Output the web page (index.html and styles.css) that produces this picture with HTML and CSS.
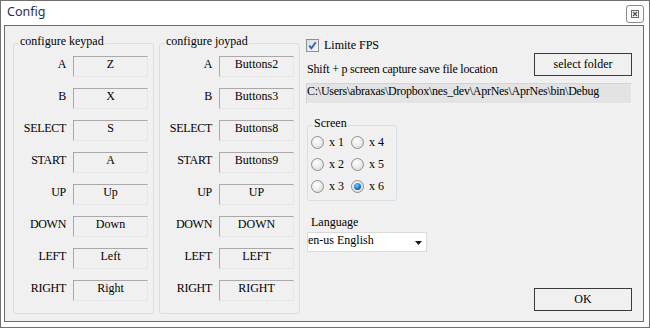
FILE: index.html
```html
<!DOCTYPE html>
<html>
<head>
<meta charset="utf-8">
<link rel="stylesheet" href="styles.css">
</head>
<body>
<div class="window">
  <div class="titlebar">
    <span class="title">Config</span>
    <span class="close"><svg width="10" height="10" viewBox="0 0 10 10"><rect x="1.5" y="1.5" width="7" height="7" fill="none" stroke="#6a6a6a" stroke-width="1"/><path d="M3 3 L7 7 M7 3 L3 7" stroke="#4a4a4a" stroke-width="1.2"/></svg></span>
  </div>
  <div class="client">
    <div class="group keys">
      <span class="legend">configure keypad</span>
      <div class="map">
        <span class="lbl">A</span><span class="box">Z</span>
        <span class="lbl">B</span><span class="box">X</span>
        <span class="lbl">SELECT</span><span class="box">S</span>
        <span class="lbl">START</span><span class="box">A</span>
        <span class="lbl">UP</span><span class="box">Up</span>
        <span class="lbl">DOWN</span><span class="box">Down</span>
        <span class="lbl">LEFT</span><span class="box">Left</span>
        <span class="lbl">RIGHT</span><span class="box">Right</span>
      </div>
    </div>
    <div class="group keys joy">
      <span class="legend">configure joypad</span>
      <div class="map">
        <span class="lbl">A</span><span class="box">Buttons2</span>
        <span class="lbl">B</span><span class="box">Buttons3</span>
        <span class="lbl">SELECT</span><span class="box">Buttons8</span>
        <span class="lbl">START</span><span class="box">Buttons9</span>
        <span class="lbl">UP</span><span class="box">UP</span>
        <span class="lbl">DOWN</span><span class="box">DOWN</span>
        <span class="lbl">LEFT</span><span class="box">LEFT</span>
        <span class="lbl">RIGHT</span><span class="box">RIGHT</span>
      </div>
    </div>
    <div class="side">
      <div class="chk-row">
        <span class="chk"><svg width="11" height="11" viewBox="0 0 11 11"><path d="M2.2 5.6 L4.4 8.2 L8.8 2.2" fill="none" stroke="#2a5cb8" stroke-width="1.8"/></svg></span>
        <span>Limite FPS</span>
      </div>
      <div class="cap-row">
        <span class="cap-text">Shift + p screen capture save file location</span>
        <span class="btn">select folder</span>
      </div>
      <div class="path">C:\Users\abraxas\Dropbox\nes_dev\AprNes\AprNes\bin\Debug</div>
      <div class="group screen">
        <span class="legend">Screen</span>
        <div class="radios">
          <span class="opt"><span class="radio"></span>x 1</span>
          <span class="opt"><span class="radio"></span>x 4</span>
          <span class="opt"><span class="radio"></span>x 2</span>
          <span class="opt"><span class="radio"></span>x 5</span>
          <span class="opt"><span class="radio"></span>x 3</span>
          <span class="opt"><span class="radio on"></span>x 6</span>
        </div>
      </div>
      <div class="lang-lbl">Language</div>
      <div class="combo">
        <span>en-us English</span>
        <svg class="arrow" width="7" height="4" viewBox="0 0 7 4"><polygon points="0,0 7,0 3.5,4" fill="#1a1a1a"/></svg>
      </div>
      <span class="btn ok">OK</span>
    </div>
  </div>
</div>
</body>
</html>
```
FILE: styles.css
```css
html, body {
  margin: 0;
  padding: 0;
  background: #ffffff;
}
body {
  font-family: "Liberation Serif", serif;
  font-size: 12px;
  color: #000;
}
.window {
  width: 650px;
  height: 328px;
  box-sizing: border-box;
  border: 1px solid #707070;
  padding: 0 5px 5px 3px;
  display: flex;
  flex-direction: column;
  background: #fff;
}
.titlebar {
  height: 24px;
  flex: none;
  display: flex;
  justify-content: space-between;
  align-items: flex-start;
}
.title {
  font-family: "Noto Sans", sans-serif;
  font-size: 12.5px;
  line-height: 16px;
  padding: 3px 0 0 3px;
  color: #1d2f5c;
}
.close {
  margin-top: 4px;
  width: 18px;
  height: 18px;
  box-sizing: border-box;
  border: 1px solid #8a8a8a;
  border-radius: 3px;
  display: flex;
  align-items: center;
  justify-content: center;
  background: #fbfbfb;
}
.client {
  flex: 1;
  border: 1px solid #6b6b6b;
  background: #f0f0f0;
  display: flex;
  align-items: flex-start;
}
.group {
  position: relative;
  box-sizing: border-box;
  border: 1px solid #d5dfe5;
  border-radius: 3px;
}
.legend {
  position: absolute;
  top: -10px;
  left: 5px;
  padding: 0 1px;
  line-height: 14px;
  background: #f0f0f0;
}
.keys {
  margin: 17px 0 0 8px;
  width: 141px;
  height: 271px;
  padding-top: 12px;
}
.joy {
  margin-left: 5px;
}
.map {
  display: grid;
  grid-template-columns: 52px 75px;
  column-gap: 7px;
  row-gap: 11px;
  grid-auto-rows: 21px;
  align-items: start;
}
.lbl {
  text-align: right;
  padding-top: 1px;
  line-height: 14px;
  white-space: nowrap;
  letter-spacing: -0.3px;
}
.box {
  height: 21px;
  box-sizing: border-box;
  border: 1px solid;
  border-color: #a9a9a9 #e6e6e6 #e6e6e6 #a9a9a9;
  text-align: center;
  line-height: 14px;
}
.side {
  margin: 12px 0 0 6px;
  width: 326px;
  display: flex;
  flex-direction: column;
}
.chk-row {
  display: flex;
  align-items: center;
  gap: 5px;
  height: 14px;
  line-height: 14px;
}
.chk {
  width: 13px;
  height: 13px;
  box-sizing: border-box;
  border: 1px solid #8e8f8f;
  background: linear-gradient(135deg, #dcdcdc, #f8f8f8);
  display: flex;
  align-items: center;
  justify-content: center;
}
.cap-row {
  margin-top: 1px;
  display: flex;
  justify-content: space-between;
  align-items: flex-end;
  line-height: 14px;
}
.cap-text {
  padding-left: 1px;
  letter-spacing: -0.2px;
}
.btn {
  width: 98px;
  height: 23px;
  box-sizing: border-box;
  border: 1px solid #3a3a3a;
  display: flex;
  align-items: center;
  justify-content: center;
  padding-bottom: 1px;
  line-height: 14px;
  background: #f0f0f0;
}
.path {
  margin-top: 7px;
  height: 21px;
  box-sizing: border-box;
  border: 1px solid;
  border-color: #d4d4d4 #f2f2f2 #f2f2f2 #d4d4d4;
  background: #e3e3e3;
  line-height: 14px;
  white-space: nowrap;
  overflow: hidden;
  letter-spacing: -0.25px;
}
.screen {
  margin: 21px 0 0 1px;
  width: 90px;
  height: 76px;
  padding: 5px 0 0 3px;
}
.radios {
  display: grid;
  grid-template-columns: 40px 40px;
  grid-auto-rows: 22px;
  align-items: center;
}
.opt {
  display: flex;
  align-items: center;
  gap: 5px;
  line-height: 14px;
}
.radio {
  width: 13px;
  height: 13px;
  box-sizing: border-box;
  border-radius: 50%;
  border: 1px solid #8f9090;
  background: radial-gradient(circle at 40% 35%, #ffffff, #d6d6d6);
  display: flex;
  align-items: center;
  justify-content: center;
}
.radio.on::after {
  content: "";
  width: 7px;
  height: 7px;
  border-radius: 50%;
  background: radial-gradient(circle at 40% 35%, #6cd0ff, #1a78c8 55%, #0b3f80);
}
.lang-lbl {
  margin-top: 14px;
  padding-left: 5px;
  line-height: 14px;
}
.combo {
  margin: 3px 0 0 1px;
  width: 120px;
  height: 20px;
  box-sizing: border-box;
  border: 1px solid #dadada;
  background: #fff;
  display: flex;
  align-items: flex-start;
  line-height: 14px;
}
.arrow {
  margin: 8px 4px 0 auto;
}
.ok {
  margin-top: 36px;
  align-self: flex-end;
}
```
